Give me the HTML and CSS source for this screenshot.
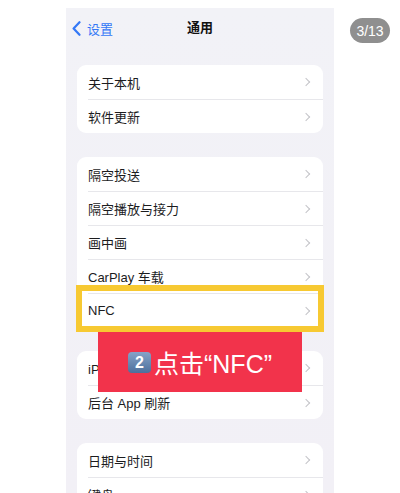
FILE: index.html
```html
<!DOCTYPE html>
<html>

<head>
    <meta name="viewport" content="width=device-width, initial-scale=1">
    <link rel="stylesheet" href="styles.css">
</head>

<body>
    <!-- Pantalla del teléfono -->
    <div class="phone">
        <div class="navbar">
            <a class="back" href="#">
                <svg width="9" height="15" viewBox="0 0 9 15"><path d="M7.5 1.2 L1.6 7.5 L7.5 13.8" fill="none" stroke="#3478f6" stroke-width="2.2" stroke-linecap="round" stroke-linejoin="round"/></svg>
                <span>设置</span>
            </a>
            <div class="title">通用</div>
        </div>

        <div class="group">
            <div class="row"><div class="row-inner"><span>关于本机</span><i class="chev"></i></div></div>
            <div class="row"><div class="row-inner"><span>软件更新</span><i class="chev"></i></div></div>
        </div>

        <div class="group">
            <div class="row"><div class="row-inner"><span>隔空投送</span><i class="chev"></i></div></div>
            <div class="row"><div class="row-inner"><span>隔空播放与接力</span><i class="chev"></i></div></div>
            <div class="row"><div class="row-inner"><span>画中画</span><i class="chev"></i></div></div>
            <div class="row"><div class="row-inner"><span>CarPlay 车载</span><i class="chev"></i></div></div>
            <div class="row"><div class="row-inner"><span>NFC</span><i class="chev"></i></div></div>
        </div>

        <div class="group">
            <div class="row"><div class="row-inner"><span>iPhone储存空间</span><i class="chev"></i></div></div>
            <div class="row"><div class="row-inner"><span>后台 App 刷新</span><i class="chev"></i></div></div>
        </div>

        <div class="group">
            <div class="row"><div class="row-inner"><span>日期与时间</span><i class="chev"></i></div></div>
            <div class="row"><div class="row-inner"><span>键盘</span><i class="chev"></i></div></div>
        </div>

        <!-- Marcas del tutorial -->
        <div class="highlight"></div>
        <div class="tip"><span class="keycap">2</span>点击“NFC”</div>
    </div>

    <div class="counter">3/13</div>
</body>

</html>
```

FILE: styles.css
```css
/* Estilos de la captura */
body {
    margin: 0;
    width: 400px;
    height: 493px;
    overflow: hidden;
    background: #fff;
    font-family: "Liberation Sans", "Noto Sans CJK SC", sans-serif;
    position: relative;
}

.phone {
    position: relative;
    width: 268px;
    height: 485px;
    margin: 8px 0 0 66px;
    background: linear-gradient(#f2f2f7, #f2f0f6);
    overflow: hidden;
}

.navbar {
    height: 38px;
    display: flex;
    align-items: center;
    justify-content: center;
    position: relative;
}

.back {
    position: absolute;
    left: 6px;
    top: 11px;
    display: flex;
    align-items: center;
    gap: 6px;
    color: #3478f6;
    text-decoration: none;
    font-size: 13px;
}

.title {
    font-size: 13px;
    font-weight: bold;
    color: #111;
    margin-top: -2px;
}

.group {
    margin: 19px 11px 0;
    background: #fff;
    border-radius: 9px;
    overflow: hidden;
}

.group + .group {
    margin-top: 24px;
}

.row {
    padding-left: 11px;
}

.row-inner {
    box-sizing: border-box;
    height: 34px;
    display: flex;
    align-items: center;
    justify-content: space-between;
    padding-right: 14px;
    font-size: 13px;
    color: #1c1c1e;
}

.row + .row .row-inner {
    border-top: 1px solid #e7e7eb;
}

.chev {
    width: 5px;
    height: 5px;
    border-top: 1.4px solid #c4c4c8;
    border-right: 1.4px solid #c4c4c8;
    transform: rotate(45deg);
}

.highlight {
    position: absolute;
    left: 10px;
    top: 277px;
    width: 248px;
    height: 47px;
    box-sizing: border-box;
    border: 6px solid #f7c932;
}

.tip {
    position: absolute;
    left: 32px;
    top: 324px;
    width: 204px;
    height: 60px;
    background: #f2334b;
    color: #fff;
    font-size: 25px;
    display: flex;
    align-items: center;
    justify-content: center;
    gap: 3px;
}

.keycap {
    flex-shrink: 0;
    width: 23px;
    height: 21px;
    border-radius: 4px;
    background: linear-gradient(#86a3c8, #4d6f9c);
    font-size: 16px;
    line-height: 21px;
    font-weight: bold;
    text-align: center;
}

.counter {
    position: absolute;
    left: 350px;
    top: 18px;
    width: 40px;
    height: 25px;
    border-radius: 13px;
    background: #8f8f8f;
    color: #fff;
    font-size: 14px;
    display: flex;
    align-items: center;
    justify-content: center;
}
```
